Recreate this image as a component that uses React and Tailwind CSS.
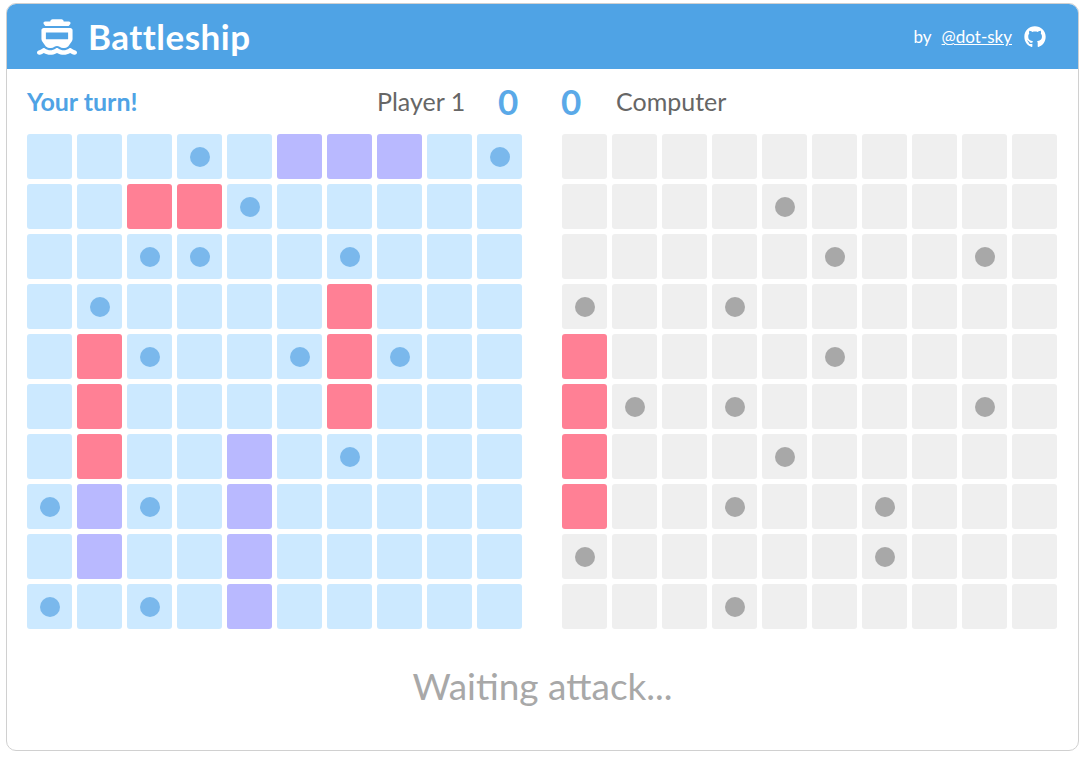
import React from "react";
import { FaFerry, FaGithub } from "react-icons/fa6";

const left = [
  "...o.ppp.o",
  "..rro.....",
  "..oo..o...",
  ".o....r...",
  ".ro..oro..",
  ".r....r...",
  ".r..p.o...",
  "opo.p.....",
  ".p..p.....",
  "o.o.p.....",
];
const right = [
  "..........",
  "....o.....",
  ".....o..o.",
  "o..o......",
  "r....o....",
  "ro.o....o.",
  "r...o.....",
  "r..o..o...",
  "o.....o...",
  "...o......",
];

function Board({ rows, cell, dot }) {
  return (
    <div className="grid grid-cols-[repeat(10,45px)] gap-[5px]">
      {rows.flatMap((row, r) =>
        row.split("").map((c, i) => (
          <div
            key={r + "-" + i}
            className={
              "h-[45px] w-[45px] rounded-[3px] flex items-center justify-center " +
              (c === "r" ? "bg-[#ff8095]" : c === "p" ? "bg-[#b9b9ff]" : cell)
            }
          >
            {c === "o" && <div className={"h-5 w-5 rounded-full " + dot} />}
          </div>
        ))
      )}
    </div>
  );
}

export default function App() {
  const font = { fontFamily: '"Lato", "Noto Sans", sans-serif' };
  return (
    <div className="w-[1088px] h-[764px] bg-white pt-[3px] pl-[6px]" style={font}>
      <div className="w-[1073px] h-[748px] rounded-[10px] border border-[#d0d0d0] overflow-hidden flex flex-col">
        <header className="h-[65px] bg-[#4fa3e5] flex items-center text-white pl-[30px] pr-[32px]">
          <FaFerry className="text-[40px] w-[40px] h-[40px]" />
          <span className="ml-[11px] text-[35px] font-bold leading-none tracking-[0.5px]">Battleship</span>
          <span className="ml-auto text-[17px] leading-none">by</span>
          <a className="ml-[10px] text-[17px] leading-none underline">@dot-sky</a>
          <FaGithub className="ml-[12px] w-[22px] h-[22px]" />
        </header>
        <div className="h-[65px] flex items-center pl-[20px] text-[25px] leading-none">
          <div className="w-[350px] font-bold text-[#4fa3e5]">Your turn!</div>
          <div className="w-[121px] text-[#666666] text-[25px]">Player 1</div>
          <div className="text-[#5aa9e8] font-bold text-[35px] w-[63px]">0</div>
          <div className="text-[#5aa9e8] font-bold text-[35px] w-[55px]">0</div>
          <div className="text-[#666666]">Computer</div>
        </div>
        <div className="flex gap-[40px] pl-[20px]">
          <Board rows={left} cell="bg-[#cce9ff]" dot="bg-[#7ab8ec]" />
          <Board rows={right} cell="bg-[#efefef]" dot="bg-[#a8a8a8]" />
        </div>
        <div className="text-center text-[#a8a8a8] text-[37px] leading-none mt-[38px]">Waiting attack...</div>
      </div>
    </div>
  );
}
